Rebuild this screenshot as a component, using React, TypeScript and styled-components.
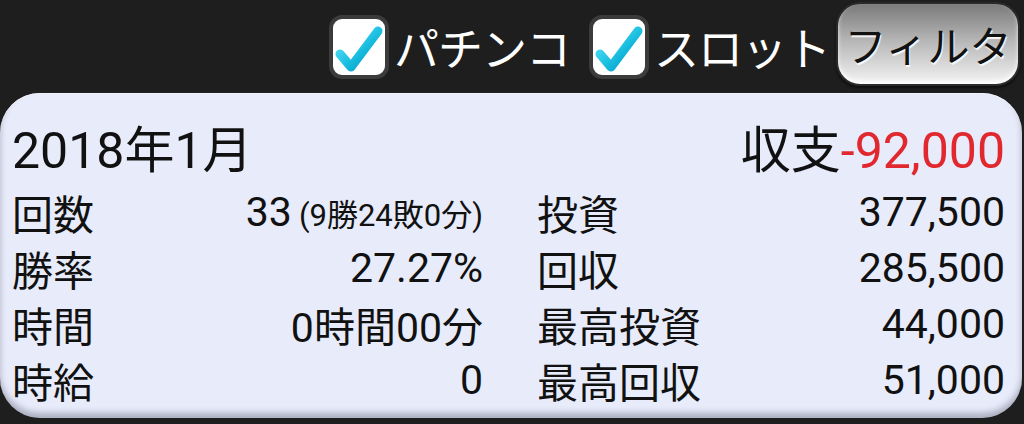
import styled, { createGlobalStyle } from "styled-components";

const GlobalStyle = createGlobalStyle`
  html, body {
    margin: 0;
    padding: 0;
    background: #1c1c1c;
  }
  body {
    font-family: Roboto, "Noto Sans CJK JP", sans-serif;
  }
`

const Screen = styled("div")`
  width: 1024px;
  height: 424px;
  display: flex;
  flex-direction: column;
  background: #1e1e1e;
  overflow: hidden;
`

const TopBar = styled("div")`
  height: 93px;
  display: flex;
  align-items: center;
  justify-content: flex-end;
  padding-right: 4px;
  box-sizing: border-box;
`

const CheckItem = styled("label")<{ $space: number }>`
  display: flex;
  align-items: center;
  gap: 4px;
  margin-right: ${(props) => props.$space}px;
  color: #fff;
  font-size: 45px;
  font-family: "Noto Sans CJK JP", sans-serif;
  letter-spacing: -1px;
`

const FilterButton = styled("button")`
  width: 184px;
  height: 84px;
  margin-top: -6px;
  border: 2px solid #2a2a2a;
  border-radius: 24px;
  background: linear-gradient(#7a7a7a 0%, #b5b5b5 45%, #f4f4f4 100%);
  box-shadow: inset 0 -3px 4px rgba(255, 255, 255, 0.8), 0 2px 3px rgba(0, 0, 0, 0.6);
  font-family: "Noto Sans CJK JP", sans-serif;
  font-size: 42px;
  color: #111;
  text-shadow: 1px 2px 1px rgba(255, 255, 255, 0.9);
  padding: 0;
`

const Card = styled("div")`
  flex: 1;
  margin: 0 2px 6px 0;
  padding: 15px 17px 0 12px;
  background: #e7ebfa;
  border-radius: 40px;
  box-shadow: inset 0 -5px 6px rgba(60, 60, 80, 0.35), inset 0 1px 0 #f4f6ff;
  color: #111;
`

const TitleRow = styled("div")`
  height: 76px;
  display: flex;
  align-items: center;
  justify-content: space-between;
  font-size: 50px;
`

const Negative = styled("span")`
  color: #e0282e;
`

const Stats = styled("div")`
  display: grid;
  grid-template-columns: 471px 468px;
  column-gap: 54px;
`

const Row = styled("div")`
  height: 56px;
  display: flex;
  align-items: center;
  justify-content: space-between;
  font-size: 41px;
`

const Value = styled("span")`
  white-space: nowrap;
`

const Small = styled("span")`
  font-size: 31px;
  margin-left: 7px;
`

const CheckBox = () => (
  <svg width="62" height="66" viewBox="0 0 62 66">
    <defs>
      <linearGradient id="chk" x1="0" y1="0" x2="1" y2="1">
        <stop offset="0" stopColor="#5fe9ff" />
        <stop offset="0.6" stopColor="#14b9dc" />
        <stop offset="1" stopColor="#0a8fb8" />
      </linearGradient>
    </defs>
    <rect x="3" y="3" width="56" height="60" rx="11" fill="#fff" stroke="#3b3b3b" strokeWidth="4" />
    <polyline
      points="12,40 23,53 50,17"
      fill="none"
      stroke="url(#chk)"
      strokeWidth="9"
      strokeLinejoin="round"
      strokeLinecap="round"
    />
  </svg>
)

type Stat = { label: string; value: React.ReactNode }

const left: Stat[] = [
  { label: "回数", value: <>33<Small>(9勝24敗0分)</Small></> },
  { label: "勝率", value: "27.27%" },
  { label: "時間", value: "0時間00分" },
  { label: "時給", value: "0" },
]

const right: Stat[] = [
  { label: "投資", value: "377,500" },
  { label: "回収", value: "285,500" },
  { label: "最高投資", value: "44,000" },
  { label: "最高回収", value: "51,000" },
]

const App = () => {
  return (
    <Screen>
      <GlobalStyle />
      <TopBar>
        <CheckItem $space={18}><CheckBox />パチンコ</CheckItem>
        <CheckItem $space={6}><CheckBox />スロット</CheckItem>
        <FilterButton>フィルタ</FilterButton>
      </TopBar>
      <Card>
        <TitleRow>
          <span>2018年1月</span>
          <span>収支<Negative>-92,000</Negative></span>
        </TitleRow>
        <Stats>
          <div>
            {left.map(s => (
              <Row key={s.label}><span>{s.label}</span><Value>{s.value}</Value></Row>
            ))}
          </div>
          <div>
            {right.map(s => (
              <Row key={s.label}><span>{s.label}</span><Value>{s.value}</Value></Row>
            ))}
          </div>
        </Stats>
      </Card>
    </Screen>
  )
}

export default App;
